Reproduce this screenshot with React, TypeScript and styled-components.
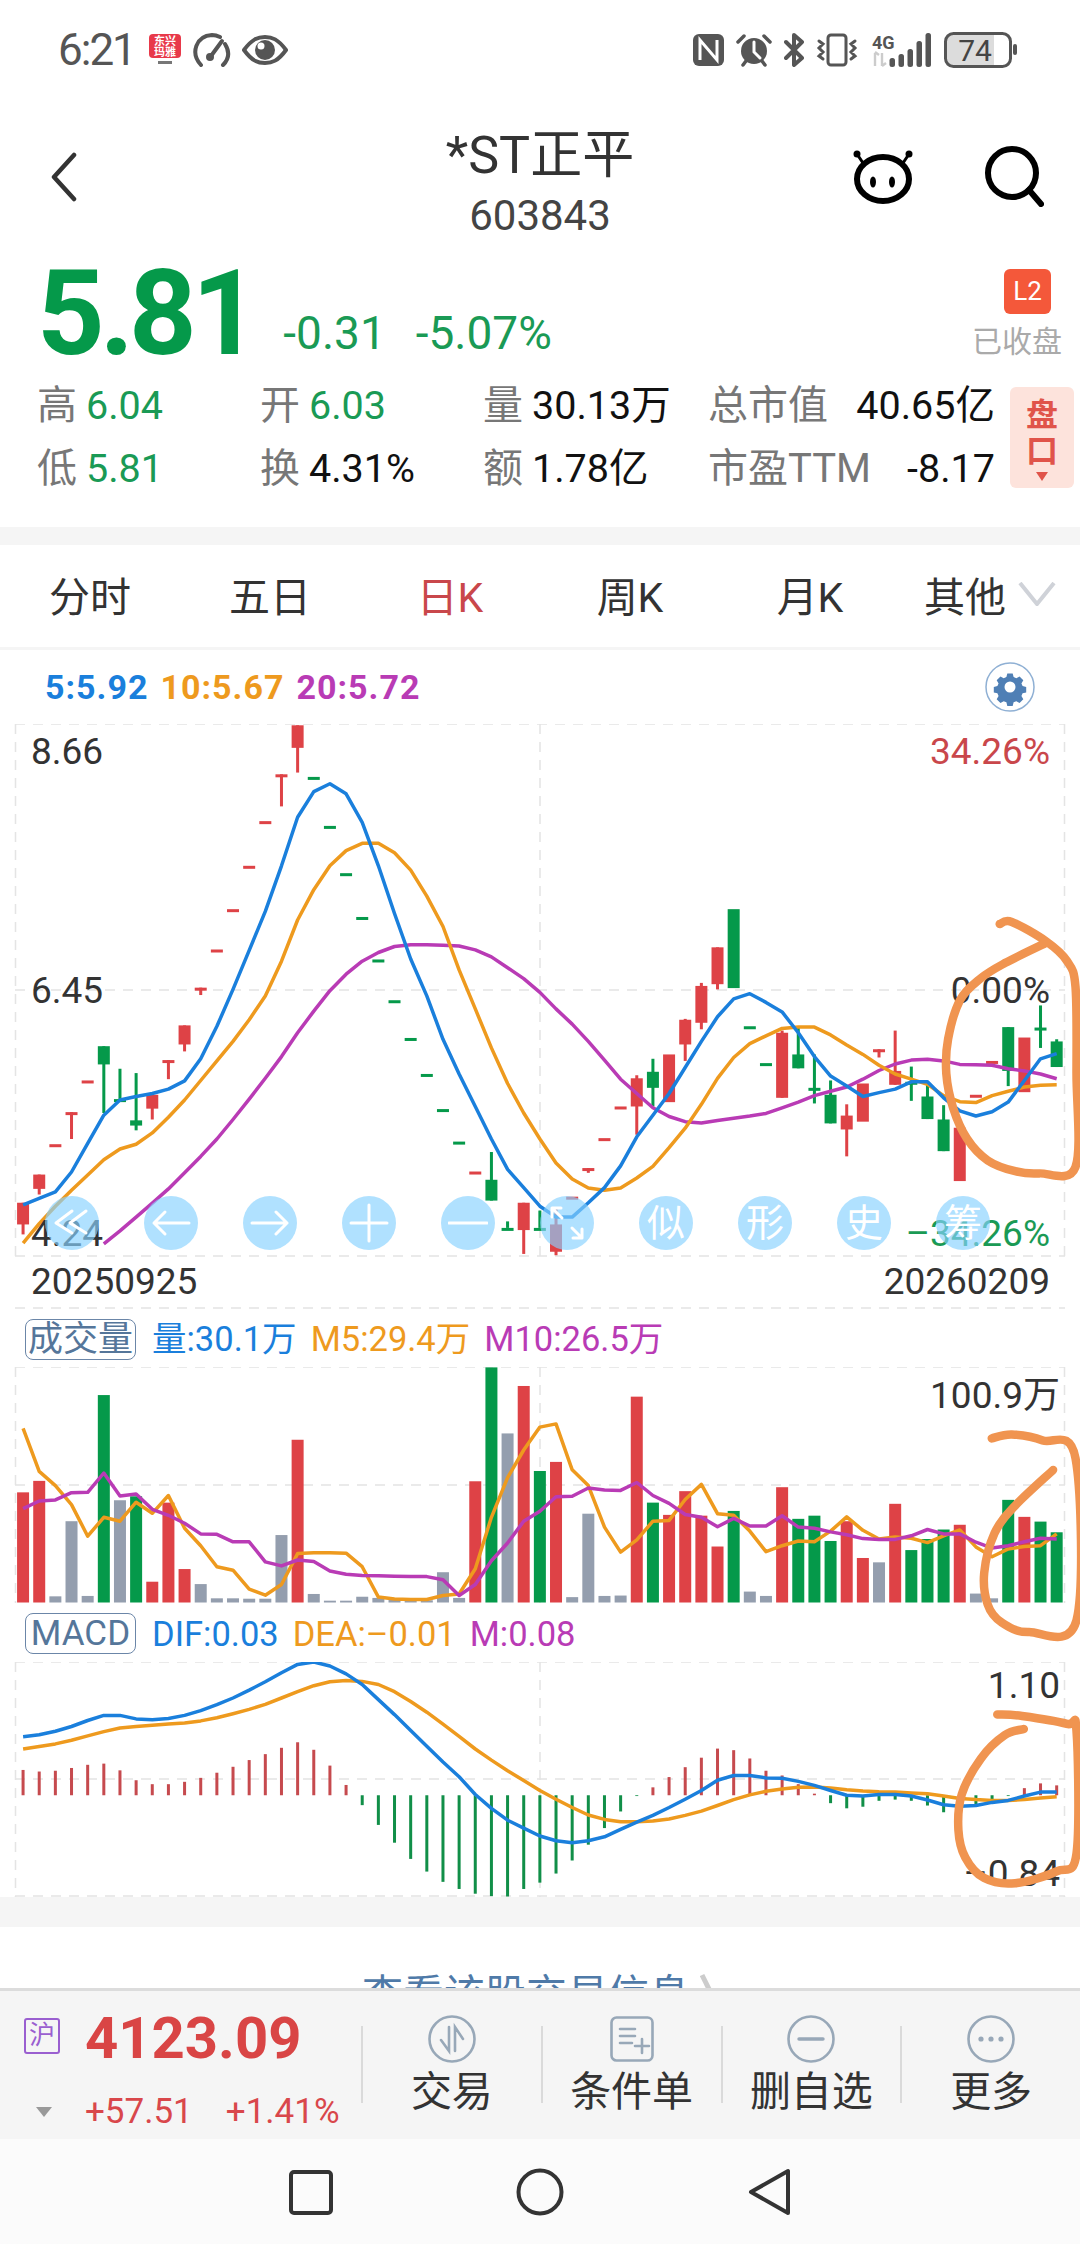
import React from 'react';
import styled, { createGlobalStyle } from 'styled-components';

const RED = '#de4246';
const GREEN = '#05994a';
const BLUE = '#1a7fdc';
const ORANGE = '#ee9a1e';
const PURPLE = '#b93bb5';
const GRAY_BAR = '#949eae';
const TEXT = '#333';

// chart series were traced off the picture, so they are stored in trace units
const STEP = 16.15;
const FIRST_X = 23.07;
const xAt = (i: number) => FIRST_X + STEP * i;
const mainY = (v: number) => (v - 193) / 2.306;
const volY = (v: number) => (v - 170) / 2.529;
const macdY = (v: number) => (v - 915) / 2.529;

type Candle = { up: boolean; top: number; bottom: number; wickTop?: number; wickBottom?: number };
const R = (top: number, bottom = top, wickTop?: number, wickBottom?: number): Candle => ({ up: true, top, bottom, wickTop, wickBottom });
const G = (top: number, bottom = top, wickTop?: number, wickBottom?: number): Candle => ({ up: false, top, bottom, wickTop, wickBottom });

const candles: Candle[] = [
  R(1297, 1347, 1297, 1370), R(1232, 1265, 1232, 1278), R(1162), R(1088, 1088, 1088, 1150), R(1015),
  G(936, 978, 936, 1090), G(1058, 1058, 988, 1062), G(1107, 1119, 998, 1130), R(1048, 1080, 1048, 1105), R(968, 968, 968, 1012),
  R(888, 932, 888, 948), R(801, 801, 801, 818), R(713), R(620), R(520),
  R(417), R(309, 309, 309, 383), R(196, 248, 196, 305), G(315), G(428),
  G(537), G(638), G(736), G(830), G(917),
  G(1000), G(1081), G(1156), R(1225), G(1244, 1292, 1180, 1292),
  G(1355, 1355, 1340, 1355), R(1297, 1360, 1297, 1415), G(1355, 1355, 1315, 1355), R(1347, 1410, 1310, 1418), R(1283),
  R(1217, 1217, 1217, 1228), R(1148), R(1075), R(1010, 1075, 1003, 1140), G(995, 1032, 965, 1075),
  R(955, 1065), R(875, 932, 873, 970), R(797, 882, 790, 897), R(708, 793, 708, 805), G(620, 802),
  G(890), G(975), R(905, 1055, 900, 1055), G(955, 987, 890, 987), G(1032, 1032, 955, 1068),
  G(1048, 1114, 1015, 1114), R(1096, 1128, 1070, 1190), R(1022, 1110), R(943, 943, 943, 962), R(993, 1025, 900, 1025),
  G(1018, 1018, 983, 1062), G(1052, 1104, 1025, 1104), G(1105, 1178, 1072, 1178), R(1124, 1247), R(1048),
  R(970), G(892, 993, 892, 1028), R(916, 1042), G(893, 893, 842, 940), G(925, 984, 920, 984),
];

const ma5 = [1302, 1287, 1272, 1226, 1160, 1095, 1060, 1052, 1045, 1035, 1016, 965, 890, 805, 715, 625, 520, 408, 349, 331, 354, 420, 520, 630, 735, 820, 920, 1000, 1075, 1150, 1220, 1262, 1305, 1330, 1330, 1297, 1262, 1212, 1145, 1095, 1045, 985, 925, 868, 827, 815, 835, 857, 905, 960, 1005, 1028, 1052, 1043, 1035, 1018, 1018, 1055, 1085, 1097, 1087, 1065, 1015, 965, 953];
const ma10 = [1390, 1345, 1305, 1268, 1233, 1198, 1173, 1162, 1136, 1100, 1060, 1015, 970, 925, 875, 820, 740, 645, 575, 520, 485, 468, 468, 490, 530, 590, 660, 760, 850, 940, 1022, 1090, 1150, 1205, 1242, 1263, 1268, 1263, 1240, 1213, 1170, 1125, 1070, 1010, 962, 930, 912, 895, 892, 892, 910, 933, 955, 980, 1000, 1012, 1024, 1050, 1064, 1066, 1050, 1040, 1030, 1026, 1025];
// the 20-day line only starts at the sixth candle
const ma20 = [1392, 1362, 1330, 1298, 1265, 1228, 1190, 1150, 1105, 1058, 1010, 960, 905, 855, 808, 770, 740, 720, 706, 702, 702, 703, 705, 714, 730, 755, 780, 812, 850, 885, 925, 968, 1012, 1045, 1078, 1098, 1110, 1113, 1107, 1102, 1097, 1091, 1078, 1065, 1050, 1040, 1030, 1012, 992, 977, 968, 966, 970, 978, 979, 980, 988, 993, 1000, 1011];

type VolKind = 'r' | 'g' | 'n';
const volumes: [number, VolKind][] = [
  [487, 'r'], [458, 'r'], [750, 'n'], [560, 'n'], [749, 'n'], [241, 'g'], [507, 'n'], [497, 'g'], [713, 'r'], [513, 'r'],
  [681, 'r'], [719, 'n'], [755, 'n'], [755, 'n'], [756, 'n'], [756, 'n'], [595, 'n'], [354, 'r'], [744, 'n'], [761, 'n'],
  [761, 'n'], [751, 'n'], [754, 'n'], [758, 'n'], [758, 'n'], [760, 'n'], [689, 'n'], [754, 'n'], [459, 'r'], [171, 'g'],
  [338, 'n'], [218, 'r'], [433, 'g'], [410, 'r'], [752, 'n'], [541, 'n'], [749, 'n'], [748, 'n'], [245, 'r'], [513, 'g'],
  [544, 'r'], [484, 'r'], [546, 'r'], [624, 'r'], [534, 'g'], [738, 'n'], [749, 'n'], [474, 'r'], [554, 'g'], [546, 'g'],
  [610, 'g'], [560, 'r'], [653, 'r'], [664, 'n'], [516, 'r'], [633, 'g'], [605, 'g'], [581, 'g'], [569, 'r'], [743, 'n'],
  [755, 'n'], [506, 'g'], [549, 'r'], [561, 'g'], [588, 'g'],
];
const volM5 = [325, 434, 470, 518, 598, 550, 560, 512, 540, 495, 578, 622, 675, 684, 732, 747, 720, 642, 640, 640, 641, 675, 752, 757, 758, 758, 748, 744, 680, 550, 450, 380, 322, 314, 430, 470, 575, 638, 607, 560, 558, 505, 467, 541, 545, 585, 637, 622, 610, 612, 585, 549, 583, 605, 600, 603, 614, 597, 582, 625, 650, 630, 624, 622, 592];
const volM10 = [528, 509, 506, 488, 487, 438, 496, 491, 530, 545, 565, 592, 593, 612, 612, 663, 673, 658, 662, 686, 694, 697, 698, 699, 700, 700, 708, 748, 720, 660, 615, 560, 535, 498, 497, 476, 481, 482, 462, 495, 515, 543, 550, 574, 553, 572, 572, 546, 575, 578, 587, 594, 604, 606, 606, 597, 581, 592, 592, 613, 628, 622, 612, 603, 605];

const MACD_ZERO = 1252;
const macdBars = [1188, 1192, 1190, 1183, 1175, 1172, 1189, 1214, 1224, 1224, 1218, 1208, 1195, 1180, 1163, 1148, 1132, 1118, 1137, 1177, 1226, 1277, 1327, 1372, 1413, 1445, 1471, 1489, 1501, 1507, 1508, 1489, 1473, 1450, 1417, 1377, 1335, 1293, 1254, 1232, 1206, 1181, 1157, 1134, 1138, 1159, 1190, 1202, 1224, 1248, 1272, 1285, 1281, 1266, 1263, 1266, 1278, 1295, 1272, 1277, 1265, 1254, 1234, 1222, 1227];
const dif = [1104, 1099, 1090, 1078, 1063, 1050, 1050, 1059, 1061, 1058, 1050, 1038, 1023, 1006, 986, 965, 942, 921, 915, 925, 945, 972, 1010, 1048, 1088, 1128, 1168, 1205, 1250, 1285, 1315, 1335, 1355, 1367, 1372, 1367, 1357, 1338, 1320, 1303, 1283, 1262, 1240, 1214, 1202, 1202, 1208, 1209, 1217, 1227, 1240, 1252, 1254, 1250, 1250, 1254, 1264, 1276, 1280, 1278, 1270, 1265, 1254, 1244, 1244];
const dea = [1135, 1129, 1122, 1113, 1102, 1091, 1082, 1078, 1075, 1072, 1069, 1064, 1056, 1046, 1035, 1022, 1006, 990, 975, 965, 962, 964, 972, 990, 1015, 1042, 1072, 1103, 1135, 1163, 1190, 1215, 1240, 1262, 1283, 1302, 1313, 1319, 1319, 1317, 1312, 1303, 1292, 1278, 1263, 1251, 1242, 1236, 1232, 1231, 1234, 1238, 1241, 1243, 1244, 1246, 1248, 1254, 1260, 1263, 1265, 1265, 1263, 1259, 1256];

const toPoints = (values: number[], toY: (v: number) => number, offset = 0) =>
  values.map((v, i) => `${xAt(i + offset).toFixed(1)},${toY(v).toFixed(1)}`).join(' ');

// hand-drawn marks on top of the screenshot, page coordinates
const smooth = (pts: number[][]) => {
  let d = `M${pts[0][0]} ${pts[0][1]}`;
  for (let i = 0; i < pts.length - 1; i++) {
    const p0 = pts[Math.max(i - 1, 0)];
    const p1 = pts[i];
    const p2 = pts[i + 1];
    const p3 = pts[Math.min(i + 2, pts.length - 1)];
    d += `C${(p1[0] + (p2[0] - p0[0]) / 6).toFixed(1)} ${(p1[1] + (p2[1] - p0[1]) / 6).toFixed(1)} ${(p2[0] - (p3[0] - p1[0]) / 6).toFixed(1)} ${(p2[1] - (p3[1] - p1[1]) / 6).toFixed(1)} ${p2[0].toFixed(1)} ${p2[1].toFixed(1)}`;
  }
  return d;
};
const fromMain = (z: number[][]) => z.map(([x, y]) => [540 + x / 2.904, 640 + y / 2.306]);
const fromLower = (z: number[][]) => z.map(([x, y]) => [540 + x / 2.904, 1300 + y / 2.529]);
const scribbles = [
  fromMain([[1335, 655], [1370, 650], [1470, 695], [1530, 740], [1555, 800], [1558, 1000], [1555, 1215], [1450, 1230], [1380, 1225], [1300, 1200], [1240, 1150], [1200, 1080], [1180, 1000], [1185, 920], [1220, 830], [1280, 780], [1350, 745], [1465, 700]]),
  fromLower([[1312, 350], [1370, 340], [1460, 355], [1555, 400], [1558, 810], [1420, 840], [1340, 815], [1300, 770], [1290, 690], [1320, 590], [1380, 520], [1490, 430]]),
  fromLower([[1328, 1048], [1400, 1052], [1530, 1072], [1558, 1090], [1558, 1400], [1500, 1445], [1380, 1475], [1290, 1462], [1235, 1410], [1215, 1340], [1225, 1250], [1280, 1160], [1350, 1100], [1405, 1085]]),
];

const GlobalStyle = createGlobalStyle`
  html, body {
    margin: 0;
    padding: 0;
    background: #fff;
  }
  * {
    box-sizing: border-box;
  }
`;

const Page = styled.div`
  position: relative;
  width: 1080px;
  height: 2244px;
  overflow: hidden;
  display: flex;
  flex-direction: column;
  background: #fff;
  color: ${TEXT};
  font-family: Roboto, 'Noto Sans CJK SC', sans-serif;
`;

const StatusBar = styled.div`
  height: 100px;
  flex: none;
  display: flex;
  align-items: center;
  justify-content: space-between;
  padding: 0 62px 0 58px;
  color: #555;
`;
const StatusGroup = styled.div<{ $gap: number }>`
  display: flex;
  align-items: center;
  gap: ${p => p.$gap}px;
`;
const Clock = styled.span`
  font-size: 44px;
  letter-spacing: -2px;
  line-height: 48px;
  width: 80px;
`;

const Header = styled.div`
  height: 145px;
  flex: none;
  display: grid;
  grid-template-columns: 1fr auto 1fr;
  align-items: start;
`;
const BackCell = styled.div`
  padding: 52px 0 0 50px;
  display: flex;
`;
const TitleCell = styled.div`
  padding-top: 26px;
  text-align: center;
`;
const Title = styled.div`
  font-size: 52px;
  line-height: 60px;
  color: #333;
`;
const Code = styled.div`
  font-size: 42px;
  line-height: 60px;
  color: #444;
`;
const HeaderIcons = styled.div`
  padding: 45px 36px 0 0;
  display: flex;
  justify-content: flex-end;
  align-items: center;
  gap: 70px;
`;

const Quote = styled.div`
  height: 282px;
  flex: none;
  padding: 24px 6px 0 37px;
`;
const PriceRow = styled.div`
  height: 105px;
  display: flex;
  align-items: flex-start;
`;
const Price = styled.div`
  font-size: 118px;
  font-weight: 700;
  line-height: 90px;
  letter-spacing: -5px;
  color: ${GREEN};
`;
const Change = styled.div`
  font-size: 46px;
  line-height: 50px;
  color: #1a9a55;
  display: flex;
  gap: 30px;
  margin: 39px 0 0 29px;
`;
const MarketState = styled.div`
  margin-left: auto;
  margin-right: 12px;
  display: flex;
  flex-direction: column;
  align-items: flex-end;
`;
const LevelBadge = styled.div`
  width: 47px;
  height: 45px;
  margin-right: 11px;
  border-radius: 6px;
  background: #f4583a;
  color: #fff;
  font-size: 26px;
  line-height: 45px;
  text-align: center;
`;
const MarketText = styled.div`
  margin-top: 10px;
  font-size: 30px;
  line-height: 36px;
  color: #aaa;
`;
const StatsRow = styled.div`
  display: flex;
  align-items: center;
`;
const StatsGrid = styled.div`
  display: grid;
  grid-template-columns: 223px 223px 225px 287px;
  grid-auto-rows: 63px;
  align-items: center;
`;
const Stat = styled.div<{ $spread?: boolean }>`
  display: flex;
  align-items: center;
  gap: 9px;
  justify-content: ${p => (p.$spread ? 'space-between' : 'flex-start')};
`;
const StatLabel = styled.span`
  font-size: 40px;
  line-height: 50px;
  color: #777;
`;
const StatValue = styled.span<{ $green?: boolean }>`
  font-size: 39.500px;
  line-height: 50px;
  color: ${p => (p.$green ? '#1a9a55' : '#111')};
`;
const DepthButton = styled.div`
  margin-left: 15px;
  width: 64px;
  height: 101px;
  border-radius: 6px;
  background: #fde3dc;
  color: #e0544a;
  font-size: 32px;
  font-weight: 700;
  line-height: 36px;
  display: flex;
  flex-direction: column;
  align-items: center;
  padding-top: 10px;
`;
const DepthArrow = styled.i`
  width: 0;
  height: 0;
  margin-top: 3px;
  border-left: 6px solid transparent;
  border-right: 6px solid transparent;
  border-top: 9px solid #e0544a;
`;

const Band = styled.div<{ $h: number }>`
  height: ${p => p.$h}px;
  flex: none;
  background: #f5f5f5;
`;

const Tabs = styled.div`
  height: 105px;
  flex: none;
  display: flex;
  padding-bottom: 4px;
  border-bottom: 3px solid #f5f5f5;
`;
const Tab = styled.div<{ $active?: boolean }>`
  width: 180px;
  display: flex;
  align-items: center;
  justify-content: center;
  gap: 12px;
  font-size: 41px;
  color: ${p => (p.$active ? '#c9474b' : '#333')};
`;

const LegendRow = styled.div`
  height: 74px;
  flex: none;
  display: flex;
  align-items: center;
  gap: 12px;
  padding: 0 45px 0 45px;
`;
const LegendItem = styled.span<{ $color: string }>`
  font-size: 34px;
  font-weight: 700;
  letter-spacing: 1px;
  color: ${p => p.$color};
`;
const GearSlot = styled.div`
  margin-left: auto;
  display: flex;
`;

const ChartBox = styled.div<{ $h: number }>`
  position: relative;
  height: ${p => p.$h}px;
  flex: none;
`;
const ChartSvg = styled.svg`
  display: block;
  width: 1080px;
  height: 100%;
`;
const AxisLabel = styled.span<{ $y: number; $right?: number; $color?: string }>`
  position: absolute;
  top: ${p => p.$y - 25}px;
  ${p => (p.$right !== undefined ? `right: ${p.$right}px;` : 'left: 31px;')}
  font-size: 37px;
  line-height: 50px;
  color: ${p => p.$color ?? '#333'};
`;
const ToolRow = styled.div`
  position: absolute;
  top: 472px;
  left: 45px;
  display: flex;
  gap: 45px;
`;
const ToolButton = styled.div`
  width: 54px;
  height: 54px;
  border-radius: 50%;
  background: rgba(135, 210, 255, 0.66);
  color: #fff;
  font-size: 38px;
  line-height: 54px;
  text-align: center;
  display: flex;
  align-items: center;
  justify-content: center;
`;

const IndicatorRow = styled.div<{ $h: number }>`
  height: ${p => p.$h}px;
  flex: none;
  display: flex;
  align-items: center;
  padding: 2px 0 0 25px;
`;
const IndicatorTag = styled.span`
  width: 111px;
  height: 41px;
  margin-right: 16px;
  border: 1px solid #6b86a8;
  border-radius: 8px;
  color: #55769a;
  font-size: 35px;
  line-height: 39px;
  text-align: center;
`;
const IndicatorValue = styled.span<{ $color: string }>`
  margin-right: 14px;
  font-size: 34.500px;
  line-height: 44px;
  color: ${p => p.$color};
`;

const MoreLink = styled.div`
  height: 61px;
  flex: none;
  overflow: hidden;
  display: flex;
  justify-content: center;
  align-items: flex-start;
  gap: 10px;
  padding: 40px 0 0 0;
  color: #4f7aa8;
  font-size: 41px;
  line-height: 56px;
`;
const MoreChevron = styled.svg`
  margin-top: 6px;
`;

const Footer = styled.div`
  height: 151px;
  flex: none;
  display: flex;
  align-items: flex-start;
  background: #f5f5f5;
  border-top: 3px solid #dcdcdc;
`;
const IndexBlock = styled.div`
  width: 361px;
  flex: none;
  padding: 27px 0 0 24px;
`;
const IndexTop = styled.div`
  height: 36px;
  display: flex;
  align-items: center;
`;
const MarketBadge = styled.span`
  width: 36px;
  height: 36px;
  border: 2px solid #9a5fd0;
  border-radius: 3px;
  color: #9a5fd0;
  font-size: 26px;
  line-height: 30px;
  text-align: center;
`;
const IndexValue = styled.span`
  margin: 4px 0 0 25px;
  font-size: 58px;
  font-weight: 700;
  line-height: 36px;
  color: #d94545;
`;
const IndexBottom = styled.div`
  height: 32px;
  margin-top: 42px;
  display: flex;
  align-items: center;
`;
const DownMark = styled.i`
  width: 0;
  height: 0;
  margin: 0 33px 0 12px;
  border-left: 8px solid transparent;
  border-right: 8px solid transparent;
  border-top: 10px solid #999;
`;
const IndexChange = styled.span`
  font-size: 35px;
  line-height: 32px;
  color: #d9474b;
  margin-right: 33px;
`;
const Divider = styled.i`
  width: 2px;
  height: 77px;
  flex: none;
  margin-top: 35px;
  background: #dadada;
`;
const Action = styled.div`
  flex: 1;
  display: flex;
  flex-direction: column;
  align-items: center;
  padding-top: 24px;
`;
const ActionLabel = styled.span`
  margin-top: 2px;
  font-size: 41px;
  line-height: 54px;
  color: #333;
`;

const NavBar = styled.div`
  flex: 1;
  display: flex;
  align-items: center;
  justify-content: center;
  gap: 182px;
  background: #fbfbfb;
`;

const Scribble = styled.svg`
  position: absolute;
  left: 0;
  top: 0;
  pointer-events: none;
`;

const StatusIconApp = () => (
  <svg width="34" height="32" viewBox="0 0 34 32">
    <rect x="1" y="0" width="32" height="24" rx="4" fill="#e8394a" />
    <text x="17" y="11" fontSize="11" fontWeight="700" fill="#fff" textAnchor="middle">东兴</text>
    <text x="17" y="22" fontSize="11" fontWeight="700" fill="#fff" textAnchor="middle">玛雅</text>
    <rect x="10" y="27" width="14" height="3" fill="#777" />
  </svg>
);
const StatusIconGauge = () => (
  <svg width="40" height="34" viewBox="0 0 40 34" fill="none" stroke="#555" strokeWidth="4" strokeLinecap="round">
    <path d="M9 32C-2 20 4 3 20 2c3 0 6 1 8 2" />
    <path d="M33 11c5 8 4 15-2 21" />
    <path d="M19 23L30 8" />
    <circle cx="18" cy="24" r="2" fill="#555" />
  </svg>
);
const StatusIconEye = () => (
  <svg width="46" height="30" viewBox="0 0 46 30">
    <path d="M2 15C10 4 16 2 23 2s13 2 21 13c-8 11-14 13-21 13S10 26 2 15z" fill="none" stroke="#555" strokeWidth="4" strokeLinejoin="round" />
    <circle cx="23" cy="15" r="10" fill="#555" />
    <circle cx="19" cy="11" r="3.500" fill="#fff" />
  </svg>
);
const StatusIconNfc = () => (
  <svg width="31" height="32" viewBox="0 0 31 32">
    <rect width="31" height="32" rx="6" fill="#555" />
    <path d="M7 26V6l17 20V6" fill="none" stroke="#fff" strokeWidth="3" />
  </svg>
);
const StatusIconAlarm = () => (
  <svg width="36" height="34" viewBox="0 0 36 34" fill="none" stroke="#555" strokeLinecap="round">
    <circle cx="18" cy="18" r="13" fill="#555" strokeWidth="0" />
    <path d="M18 9v10l6 6" stroke="#fff" strokeWidth="3" />
    <path d="M2 9l6-6M34 9l-6-6M7 32l3-4M29 32l-3-4" strokeWidth="3.500" />
  </svg>
);
const StatusIconBluetooth = () => (
  <svg width="20" height="34" viewBox="0 0 20 34" fill="none" stroke="#555" strokeWidth="4" strokeLinecap="round" strokeLinejoin="round">
    <path d="M2 9l16 16-8 7V2l8 7L2 25" />
  </svg>
);
const StatusIconVibrate = () => (
  <svg width="42" height="34" viewBox="0 0 42 34" fill="none" stroke="#555" strokeWidth="3">
    <rect x="12" y="2" width="18" height="30" rx="3" />
    <path d="M3 8l4 3-4 4 4 4-4 4 4 3M39 8l-4 3 4 4-4 4 4 4-4 3" strokeLinecap="round" />
  </svg>
);
const StatusIconSignal = () => (
  <svg width="62" height="36" viewBox="0 0 62 36">
    <text x="2" y="17" fontSize="18" fontWeight="700" fill="#555">4G</text>
    <path d="M5 21v13M9 23l-4-3M12 21v13M12 34l4-3" fill="none" stroke="#ccc" strokeWidth="2.400" />
    {[[22, 26], [31, 22], [40, 17], [49, 9], [58, 1]].map(([x, top]) => (
      <rect key={x} x={x - 2.5} y={top} width="5.5" height={35 - top} rx="2.5" fill="#555" />
    ))}
  </svg>
);
const StatusIconBattery = () => (
  <svg width="74" height="36" viewBox="0 0 74 36">
    <path d="M10 2h40v32H10a8 8 0 0 1-8-8V10a8 8 0 0 1 8-8z" fill="#dcdcdc" />
    <rect x="1.500" y="1.500" width="65" height="33" rx="8" fill="none" stroke="#555" strokeWidth="3" />
    <text x="31" y="29" fontSize="30" fill="#444" textAnchor="middle" fontFamily="Roboto, sans-serif">74</text>
    <rect x="69" y="12" width="4" height="11" rx="2" fill="#555" />
  </svg>
);
const BackIcon = () => (
  <svg width="30" height="50" viewBox="0 0 30 50" fill="none" stroke="#333" strokeWidth="4.500" strokeLinecap="round" strokeLinejoin="round">
    <path d="M24 3L4 25l20 22" />
  </svg>
);
const PigIcon = () => (
  <svg width="62" height="56" viewBox="0 0 62 56" fill="none" stroke="#000" strokeWidth="6">
    <ellipse cx="31" cy="31" rx="26" ry="22" />
    <path d="M5 6l6 9M57 6l-6 9" strokeWidth="3" />
    <circle cx="5" cy="6" r="3.500" fill="#000" stroke="none" />
    <circle cx="57" cy="6" r="3.500" fill="#000" stroke="none" />
    <ellipse cx="21" cy="34" rx="3" ry="5.500" fill="#000" stroke="none" />
    <ellipse cx="40" cy="34" rx="3" ry="5.500" fill="#000" stroke="none" />
  </svg>
);
const SearchIcon = () => (
  <svg width="60" height="62" viewBox="0 0 60 62" fill="none" stroke="#000" strokeWidth="6" strokeLinecap="round">
    <circle cx="28" cy="28" r="24" />
    <path d="M45 45l12 14" />
  </svg>
);
const TabChevron = () => (
  <svg width="38" height="24" viewBox="0 0 38 24" fill="none" stroke="#cfd2d8" strokeWidth="4">
    <path d="M2 1l17 21L36 1" />
  </svg>
);
const GearIcon = () => (
  <svg width="50" height="50" viewBox="0 0 50 50">
    <circle cx="25" cy="25" r="24" fill="#fff" stroke="#8fb0d4" strokeWidth="1.500" />
    <path
      d="M22 10h6l1 4 3 1.300 3.600-2.100 4.200 4.200-2.100 3.600 1.300 3 4 1v6l-4 1-1.300 3 2.100 3.600-4.200 4.200-3.600-2.100-3 1.300-1 4h-6l-1-4-3-1.300-3.600 2.100-4.200-4.200 2.100-3.600-1.300-3-4-1v-6l4-1 1.300-3-2.100-3.600 4.200-4.200 3.600 2.100 3-1.300z"
      fill="#4f7fb5"
      transform="translate(2.500 2.500) scale(0.9)"
    />
    <circle cx="25" cy="25" r="5.500" fill="#fff" />
  </svg>
);

const toolIcon = (paths: string) => (
  <svg width="40" height="40" viewBox="0 0 40 40" fill="none" stroke="#fff" strokeWidth="3" strokeLinecap="round" strokeLinejoin="round">
    <path d={paths} />
  </svg>
);
const tools: React.ReactNode[] = [
  toolIcon('M20 8L4 20l16 10M34 8L18 20l16 10'),
  toolIcon('M38 20H3M14 9L3 20l11 11'),
  toolIcon('M2 20h35M26 9l11 11-11 11'),
  toolIcon('M20 2v36M2 20h36'),
  toolIcon('M1 20h38'),
  toolIcon('M15 15L5 5M5 14V5h9M25 25l10 10M35 26v9h-9'),
  '似', '形', '史', '筹',
];

const TradeIcon = () => (
  <svg width="48" height="48" viewBox="0 0 48 48" fill="none" stroke="#98a8b8" strokeWidth="2.600" strokeLinecap="round">
    <circle cx="24" cy="24" r="22.500" />
    <path d="M21 12v24l-8-11M27 36V12l8 12" />
  </svg>
);
const ConditionIcon = () => (
  <svg width="44" height="48" viewBox="0 0 44 48" fill="none" stroke="#98a8b8" strokeWidth="2.600" strokeLinecap="round">
    <rect x="1.500" y="2.500" width="41" height="43" rx="5" />
    <path d="M10 14h15M10 21h15M10 28h12M25 31h14M32 24v14" />
  </svg>
);
const RemoveIcon = () => (
  <svg width="48" height="48" viewBox="0 0 48 48" fill="none" stroke="#98a8b8" strokeWidth="2.600" strokeLinecap="round">
    <circle cx="24" cy="24" r="22.500" />
    <path d="M12 24h24" strokeWidth="3.400" />
  </svg>
);
const MoreIcon = () => (
  <svg width="48" height="48" viewBox="0 0 48 48" fill="#98a8b8" stroke="none">
    <circle cx="24" cy="24" r="22.500" fill="none" stroke="#98a8b8" strokeWidth="2.600" />
    <circle cx="14" cy="24" r="2.600" />
    <circle cx="24" cy="24" r="2.600" />
    <circle cx="34" cy="24" r="2.600" />
  </svg>
);

const Dashes = ({ h, rows }: { h: number; rows: number[] }) => (
  <g stroke="#e4e4e4" strokeWidth="1.500" strokeDasharray="10 8" fill="none">
    {rows.map(y => <line key={y} x1="15" x2="1065" y1={y} y2={y} />)}
    <line x1="15.500" x2="15.500" y1="0" y2={h} />
    <line x1="540" x2="540" y1="0" y2={h} />
    <line x1="1064.500" x2="1064.500" y1="0" y2={h} />
  </g>
);

const Line = ({ points, color }: { points: string; color: string }) => (
  <polyline points={points} fill="none" stroke={color} strokeWidth="3.500" strokeLinejoin="round" />
);

const CandleChart = () => (
  <ChartSvg viewBox="0 0 1080 585">
    <Dashes h={532} rows={[0, 266, 532, 584]} />
    {candles.map((c, i) => {
      const x = xAt(i);
      const color = c.up ? RED : GREEN;
      const top = mainY(c.top);
      const height = Math.max(mainY(c.bottom) - top, 3);
      return (
        <g key={i} fill={color}>
          {c.wickTop !== undefined && (
            <rect x={x - 1.5} y={mainY(c.wickTop)} width="3" height={mainY(c.wickBottom ?? c.wickTop) - mainY(c.wickTop)} />
          )}
          <rect x={x - 6} y={top} width="12" height={height} />
        </g>
      );
    })}
    <Line points={toPoints(ma20, mainY, 5)} color={PURPLE} />
    <Line points={toPoints(ma10, mainY)} color={ORANGE} />
    <Line points={toPoints(ma5, mainY)} color={BLUE} />
  </ChartSvg>
);

const VolumeChart = () => {
  const barColor = { r: RED, g: GREEN, n: GRAY_BAR };
  return (
    <ChartSvg viewBox="0 0 1080 236">
      <Dashes h={236} rows={[0, 118]} />
      {volumes.map(([top, kind], i) => (
        <rect key={i} x={xAt(i) - 6} y={volY(top)} width="12" height={235.5 - volY(top)} fill={barColor[kind]} />
      ))}
      <Line points={toPoints(volM5, volY)} color={ORANGE} />
      <Line points={toPoints(volM10, volY)} color={PURPLE} />
    </ChartSvg>
  );
};

const MacdChart = () => (
  <ChartSvg viewBox="0 0 1080 235">
    <Dashes h={235} rows={[0, 117, 234]} />
    {macdBars.map((v, i) => {
      const positive = v < MACD_ZERO;
      const y1 = macdY(Math.min(v, MACD_ZERO));
      const y2 = macdY(Math.max(v, MACD_ZERO));
      return <rect key={i} x={xAt(i) - 1.5} y={y1} width="3" height={y2 - y1} fill={positive ? '#c64a4e' : '#118f48'} />;
    })}
    <Line points={toPoints(dea, macdY)} color={ORANGE} />
    <Line points={toPoints(dif, macdY)} color={BLUE} />
  </ChartSvg>
);

const stats = [
  { label: '高', value: '6.04', green: true },
  { label: '开', value: '6.03', green: true },
  { label: '量', value: '30.13万' },
  { label: '总市值', value: '40.65亿', spread: true },
  { label: '低', value: '5.81', green: true },
  { label: '换', value: '4.31%' },
  { label: '额', value: '1.78亿' },
  { label: '市盈TTM', value: '-8.17', spread: true },
];

const actions = [
  { label: '交易', icon: <TradeIcon /> },
  { label: '条件单', icon: <ConditionIcon /> },
  { label: '删自选', icon: <RemoveIcon /> },
  { label: '更多', icon: <MoreIcon /> },
];

export default function App() {
  return (
    <Page>
      <GlobalStyle />
      <StatusBar>
        <StatusGroup $gap={10}>
          <Clock>6:21</Clock>
          <StatusIconApp />
          <StatusIconGauge />
          <StatusIconEye />
        </StatusGroup>
        <StatusGroup $gap={12}>
          <StatusIconNfc />
          <StatusIconAlarm />
          <StatusIconBluetooth />
          <StatusIconVibrate />
          <StatusIconSignal />
          <StatusIconBattery />
        </StatusGroup>
      </StatusBar>

      <Header>
        <BackCell><BackIcon /></BackCell>
        <TitleCell>
          <Title>*ST正平</Title>
          <Code>603843</Code>
        </TitleCell>
        <HeaderIcons>
          <PigIcon />
          <SearchIcon />
        </HeaderIcons>
      </Header>

      <Quote>
        <PriceRow>
          <Price>5.81</Price>
          <Change>
            <span>-0.31</span>
            <span>-5.07%</span>
          </Change>
          <MarketState>
            <LevelBadge>L2</LevelBadge>
            <MarketText>已收盘</MarketText>
          </MarketState>
        </PriceRow>
        <StatsRow>
          <StatsGrid>
            {stats.map(s => (
              <Stat key={s.label} $spread={s.spread}>
                <StatLabel>{s.label}</StatLabel>
                <StatValue $green={s.green}>{s.value}</StatValue>
              </Stat>
            ))}
          </StatsGrid>
          <DepthButton>
            <span>盘</span>
            <span>口</span>
            <DepthArrow />
          </DepthButton>
        </StatsRow>
      </Quote>

      <Band $h={18} />

      <Tabs>
        <Tab>分时</Tab>
        <Tab>五日</Tab>
        <Tab $active>日K</Tab>
        <Tab>周K</Tab>
        <Tab>月K</Tab>
        <Tab>其他<TabChevron /></Tab>
      </Tabs>

      <LegendRow>
        <LegendItem $color={BLUE}>5:5.92</LegendItem>
        <LegendItem $color={ORANGE}>10:5.67</LegendItem>
        <LegendItem $color={PURPLE}>20:5.72</LegendItem>
        <GearSlot><GearIcon /></GearSlot>
      </LegendRow>

      <ChartBox $h={585}>
        <CandleChart />
        <AxisLabel $y={28}>8.66</AxisLabel>
        <AxisLabel $y={267}>6.45</AxisLabel>
        <AxisLabel $y={510}>4.24</AxisLabel>
        <AxisLabel $y={558}>20250925</AxisLabel>
        <AxisLabel $y={28} $right={30} $color="#c9474b">34.26%</AxisLabel>
        <AxisLabel $y={267} $right={30}>0.00%</AxisLabel>
        <AxisLabel $y={510} $right={30} $color="#1a9a55">–34.26%</AxisLabel>
        <AxisLabel $y={558} $right={30}>20260209</AxisLabel>
        <ToolRow>
          {tools.map((t, i) => <ToolButton key={i}>{t}</ToolButton>)}
        </ToolRow>
      </ChartBox>

      <IndicatorRow $h={58}>
        <IndicatorTag>成交量</IndicatorTag>
        <IndicatorValue $color={BLUE}>量:30.1万</IndicatorValue>
        <IndicatorValue $color={ORANGE}>M5:29.4万</IndicatorValue>
        <IndicatorValue $color={PURPLE}>M10:26.5万</IndicatorValue>
      </IndicatorRow>
      <ChartBox $h={236}>
        <VolumeChart />
        <AxisLabel $y={29} $right={20}>100.9万</AxisLabel>
      </ChartBox>

      <IndicatorRow $h={59}>
        <IndicatorTag>MACD</IndicatorTag>
        <IndicatorValue $color={BLUE}>DIF:0.03</IndicatorValue>
        <IndicatorValue $color={ORANGE}>DEA:–0.01</IndicatorValue>
        <IndicatorValue $color={PURPLE}>M:0.08</IndicatorValue>
      </IndicatorRow>
      <ChartBox $h={235}>
        <MacdChart />
        <AxisLabel $y={24} $right={20}>1.10</AxisLabel>
        <AxisLabel $y={212} $right={20}>–0.84</AxisLabel>
      </ChartBox>

      <Band $h={30} />

      <MoreLink>
        <span>查看该股交易信息</span>
        <MoreChevron width="18" height="30" viewBox="0 0 18 30" fill="none" stroke="#ccc" strokeWidth="5"><path d="M2 2l14 28" /></MoreChevron>
      </MoreLink>

      <Footer>
        <IndexBlock>
          <IndexTop>
            <MarketBadge>沪</MarketBadge>
            <IndexValue>4123.09</IndexValue>
          </IndexTop>
          <IndexBottom>
            <DownMark />
            <IndexChange>+57.51</IndexChange>
            <IndexChange>+1.41%</IndexChange>
          </IndexBottom>
        </IndexBlock>
        {actions.map(a => (
          <React.Fragment key={a.label}>
            <Divider />
            <Action>
              {a.icon}
              <ActionLabel>{a.label}</ActionLabel>
            </Action>
          </React.Fragment>
        ))}
      </Footer>

      <NavBar>
        <svg width="48" height="48" viewBox="0 0 48 48" fill="none" stroke="#333" strokeWidth="4" strokeLinejoin="round">
          <rect x="5" y="4" width="40" height="41" rx="3" />
        </svg>
        <svg width="48" height="48" viewBox="0 0 48 48" fill="none" stroke="#333" strokeWidth="4">
          <circle cx="24" cy="24" r="21.500" />
        </svg>
        <svg width="48" height="48" viewBox="0 0 48 48" fill="none" stroke="#333" strokeWidth="4" strokeLinejoin="round">
          <path d="M42 3v42L5 24z" />
        </svg>
      </NavBar>

      <Scribble width="1080" height="2244" viewBox="0 0 1080 2244" fill="none" stroke="#f09450" strokeWidth="8.500" strokeLinecap="round" strokeLinejoin="round">
        {scribbles.map((s, i) => <path key={i} d={smooth(s)} />)}
      </Scribble>
    </Page>
  );
}
